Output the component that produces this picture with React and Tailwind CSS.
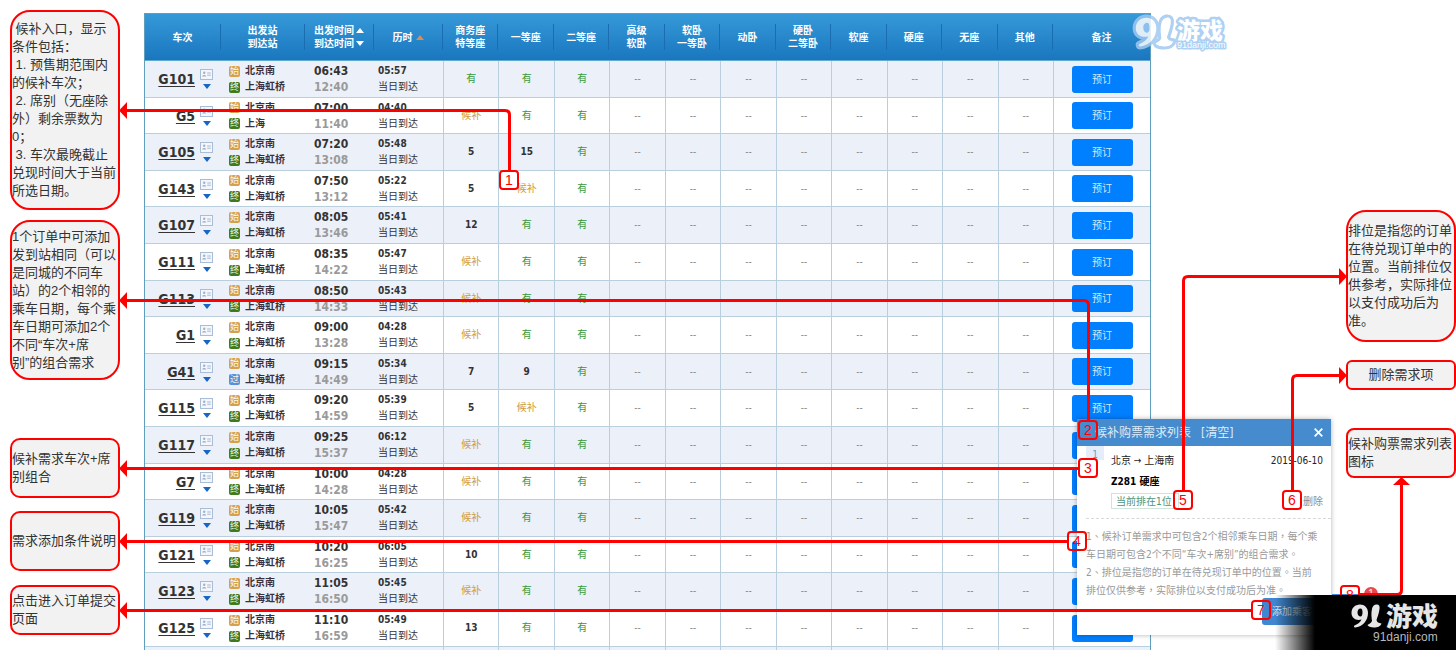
const latin = "font-['DejaVu_Sans_Condensed','DejaVu_Sans','Noto_Sans_CJK_SC',sans-serif]"

const stationTags = {
  start: { text: '始', className: 'bg-[#d3a150]' },
  end: { text: '终', className: 'bg-[#3f7a1c]' },
  pass: { text: '过', className: 'bg-[#5b8fd8]' },
}

// business, first and second class are the only seats sold on these trains
const trains = [
  { no: 'G101', from: '北京南', to: '上海虹桥', dep: '06:43', arr: '12:40', time: '05:57', seats: ['有', '有', '有'] },
  { no: 'G5', from: '北京南', to: '上海', dep: '07:00', arr: '11:40', time: '04:40', seats: ['候补', '有', '有'] },
  { no: 'G105', from: '北京南', to: '上海虹桥', dep: '07:20', arr: '13:08', time: '05:48', seats: ['5', '15', '有'] },
  { no: 'G143', from: '北京南', to: '上海虹桥', dep: '07:50', arr: '13:12', time: '05:22', seats: ['5', '候补', '有'] },
  { no: 'G107', from: '北京南', to: '上海虹桥', dep: '08:05', arr: '13:46', time: '05:41', seats: ['12', '有', '有'] },
  { no: 'G111', from: '北京南', to: '上海虹桥', dep: '08:35', arr: '14:22', time: '05:47', seats: ['候补', '有', '有'] },
  { no: 'G113', from: '北京南', to: '上海虹桥', dep: '08:50', arr: '14:33', time: '05:43', seats: ['候补', '有', '有'] },
  { no: 'G1', from: '北京南', to: '上海虹桥', dep: '09:00', arr: '13:28', time: '04:28', seats: ['候补', '有', '有'] },
  { no: 'G41', from: '北京南', to: '上海虹桥', dep: '09:15', arr: '14:49', time: '05:34', seats: ['7', '9', '有'], toTag: 'pass' },
  { no: 'G115', from: '北京南', to: '上海虹桥', dep: '09:20', arr: '14:59', time: '05:39', seats: ['5', '候补', '有'] },
  { no: 'G117', from: '北京南', to: '上海虹桥', dep: '09:25', arr: '15:37', time: '06:12', seats: ['候补', '有', '有'] },
  { no: 'G7', from: '北京南', to: '上海虹桥', dep: '10:00', arr: '14:28', time: '04:28', seats: ['候补', '有', '有'] },
  { no: 'G119', from: '北京南', to: '上海虹桥', dep: '10:05', arr: '15:47', time: '05:42', seats: ['候补', '有', '有'] },
  { no: 'G121', from: '北京南', to: '上海虹桥', dep: '10:20', arr: '16:25', time: '06:05', seats: ['10', '有', '有'] },
  { no: 'G123', from: '北京南', to: '上海虹桥', dep: '11:05', arr: '16:50', time: '05:45', seats: ['候补', '有', '有'] },
  { no: 'G125', from: '北京南', to: '上海虹桥', dep: '11:10', arr: '16:59', time: '05:49', seats: ['13', '有', '有'] },
]

const seatHeads = [
  ['商务座', '特等座'], ['一等座'], ['二等座'], ['高级', '软卧'], ['软卧', '一等卧'], ['动卧'],
  ['硬卧', '二等卧'], ['软座'], ['硬座'], ['无座'], ['其他'],
]

const leftNotes = [
  {
    box: 'h-[200px] rounded-[20px]',
    lines: [' 候补入口，显示', '条件包括：', ' 1. 预售期范围内', '的候补车次；', ' 2. 席别（无座除', '外）剩余票数为', '0；', ' 3. 车次最晚截止', '兑现时间大于当前', '所选日期。'],
  },
  {
    box: 'mt-[10px] h-[160px] rounded-[20px]',
    lines: ['1个订单中可添加', '发到站相同（可以', '是同城的不同车', '站）的2个相邻的', '乘车日期，每个乘', '车日期可添加2个', '不同“车次+席', '别”的组合需求'],
  },
  { box: 'mt-[58px] h-[60px] rounded-[10px]', lines: ['候补需求车次+席', '别组合'] },
  { box: 'mt-[13px] h-[60px] rounded-[10px]', lines: ['需求添加条件说明'] },
  { box: 'mt-[14px] h-[50px] rounded-[10px]', lines: ['点击进入订单提交', '页面'] },
]

const rightNotes = [
  {
    box: 'h-[132px] rounded-[20px]',
    lines: ['排位是指您的订单', '在待兑现订单中的', '位置。当前排位仅', '供参考，实际排位', '以支付成功后为', '准。'],
  },
  { box: 'mt-[18px] h-[30px] items-center rounded-[6px]', lines: ['删除需求项'] },
  { box: 'mt-[38px] h-[50px] rounded-[8px]', lines: ['候补购票需求列表', '图标'] },
]

const markers = [
  { n: 1, at: 'left-[499px] top-[170px]' },
  { n: 2, at: 'left-[1078px] top-[420px]' },
  { n: 3, at: 'left-[1078px] top-[458px]' },
  { n: 4, at: 'left-[1067px] top-[531px]' },
  { n: 5, at: 'left-[1173px] top-[490px]' },
  { n: 6, at: 'left-[1282px] top-[490px]' },
  { n: 7, at: 'left-[1251px] top-[600px]' },
  { n: 8, at: 'left-[1340px] top-[585px]' },
]

const Note = ({ note }) => (
  <div
    className={`flex flex-col justify-center whitespace-pre border-2 border-[#ff0000] bg-[#f2f2f2] text-[13px] leading-[18px] text-[#333333] ${note.box}`}
  >
    {note.lines.map(line => (
      <p key={line}>{line}</p>
    ))}
  </div>
)

const StationTag = ({ type }) => (
  <span
    className={`flex size-[11px] items-center justify-center rounded-[2px] text-[9px] font-normal leading-none text-[#fff8e8] ${stationTags[type].className}`}
  >
    {stationTags[type].text}
  </span>
)

const CardIcon = () => (
  <svg width="13" height="11" viewBox="0 0 13 11" fill="none">
    <rect x="0.5" y="0.5" width="12" height="10" fill="#f3f7fc" stroke="#a9bdd6" />
    <circle cx="4.2" cy="3.7" r="1.2" fill="#9fb0c8" />
    <path d="M2.2 7.5c0-2 4-2 4 0z" fill="#9fb0c8" />
    <path d="M7.2 4h3.6M7.2 6.2h3.6" stroke="#a9b7cb" />
  </svg>
)

const Triangle = ({ up, color }) => (
  <svg width="8" height="5" viewBox="0 0 8 5" className="inline-block shrink-0">
    <path d={up ? 'M0 5 4 0l4 5z' : 'M0 0h8L4 5z'} fill={color} />
  </svg>
)

const HeadCell = ({ children, last }) => (
  <th className="h-[47px] border-b border-[#5fa9d2] p-0 text-[10px] font-bold leading-[13px] text-white">
    <div
      className={`flex h-[26px] flex-col items-center justify-center ${last ? '' : 'border-r border-[#1b6cb0]'}`}
    >
      {children}
    </div>
  </th>
)

const Seat = ({ value }) => {
  if (value === '有') return <span className="text-[#36993a]">有</span>
  if (value === '候补') return <a href="#waitlist" className="text-[#d29a35]">候补</a>
  if (value === '--') return <span className="text-[#8a8a8a]">--</span>
  return <span className="font-bold text-[#333333]">{value}</span>
}

const cellLine = 'border-b border-[#b9cfde] p-0'

const TrainRow = ({ train }) => (
  <tr className="h-[37px] odd:bg-[#ecf0f8] even:bg-white nth-[5n+2]:h-9 nth-[5n+4]:h-9">
    <td className={cellLine}>
      <div className="flex items-center justify-end gap-[5px] pr-2">
        <a href="#train" className="text-[14px] font-bold leading-4 text-[#333333] underline underline-offset-2">
          {train.no}
        </a>
        <div className="flex flex-col items-center gap-1">
          <CardIcon />
          <Triangle color="#1766c6" />
        </div>
      </div>
    </td>
    <td className={cellLine}>
      <div className="pl-2 text-[10px] font-bold leading-4 text-[#3a2f3c]">
        <div className="flex items-center gap-[5px]"><StationTag type="start" />{train.from}</div>
        <div className="flex items-center gap-[5px]"><StationTag type={train.toTag || 'end'} />{train.to}</div>
      </div>
    </td>
    <td className={cellLine}>
      <div className="pl-[9px] text-[12px] font-bold leading-4">
        <p className="text-[#333333]">{train.dep}</p>
        <p className="text-[#9a9a9a]">{train.arr}</p>
      </div>
    </td>
    <td className={cellLine}>
      <div className="pl-1 text-[10px] leading-4 text-[#333333]">
        <p className="font-bold">{train.time}</p>
        <p>当日到达</p>
      </div>
    </td>
    {seatHeads.map((head, i) => (
      <td key={i} className="border-b border-l border-[#b9cfde] p-0 text-center text-[10px] leading-4">
        <Seat value={train.seats[i] || '--'} />
      </td>
    ))}
    <td className="border-b border-l border-[#b9cfde] p-0 text-center">
      <button className="mx-auto block h-[27px] w-[61px] rounded-[3px] bg-[#007fff] text-[10px] text-[#d3eaff]">
        预订
      </button>
    </td>
  </tr>
)

const TrainTable = () => (
  <table className={`w-full table-fixed border-separate border-spacing-0 border-x border-t border-[#5f9fbd] ${latin}`}>
    <colgroup>
      <col className="w-[76px]" />
      <col className="w-[84px]" />
      <col className="w-[69px]" />
      <col className="w-[69px]" />
      {seatHeads.map((head, i) => <col key={i} />)}
      <col className="w-[97px]" />
    </colgroup>
    <thead className="bg-linear-to-b from-[#3599d8] to-[#1976be]">
      <tr>
        <HeadCell>车次</HeadCell>
        <HeadCell><span>出发站</span><span>到达站</span></HeadCell>
        <HeadCell>
          <span className="flex items-center gap-[2px]">出发时间<Triangle up color="#ffffff" /></span>
          <span className="flex items-center gap-[2px]">到达时间<Triangle color="#ffffff" /></span>
        </HeadCell>
        <HeadCell>
          <span className="flex items-center gap-[3px]">历时<Triangle up color="#dc8b52" /></span>
        </HeadCell>
        {seatHeads.map((head, i) => (
          <HeadCell key={i}>
            {head.map(line => <span key={line}>{line}</span>)}
          </HeadCell>
        ))}
        <HeadCell last>备注</HeadCell>
      </tr>
    </thead>
    <tbody>
      {trains.map(train => <TrainRow key={train.no} train={train} />)}
      <tr className="h-[37px] bg-[#ecf0f8]">
        <td colSpan={4} />
        {seatHeads.map((head, i) => <td key={i} className="border-l border-[#b9cfde]" />)}
        <td className="border-l border-[#b9cfde]" />
      </tr>
    </tbody>
  </table>
)

const WaitlistPanel = () => (
  <section
    className={`absolute left-[1077px] top-[419px] h-[216px] w-[254px] bg-white text-[10px] text-[#222222] shadow-[0_0_5px_rgba(0,0,0,0.3)] font-['DejaVu_Sans_Condensed','DejaVu_Sans','Noto_Sans_CJK_TC',sans-serif]`}
  >
    <div className="flex h-[27px] items-center bg-[#468bcd] pl-[18px] pr-2 text-[12px] text-[#dcecf8]">
      <h2>候补购票需求列表</h2>
      <button className="ml-[10px]">[清空]</button>
      <button aria-label="关闭" className="ml-auto text-white">
        <svg width="9" height="9" viewBox="0 0 9 9" stroke="currentColor" strokeWidth="1.8">
          <path d="M0.7 0.7l7.6 7.6M8.3 0.7L0.7 8.3" />
        </svg>
      </button>
    </div>

    {/* Queued request */}
    <div className="ml-[9px] flex h-[73px] border-b border-dashed border-[#d8d8d8]">
      <span className="h-[14px] w-[18px] bg-[#e4eefa] pt-[2px] text-center leading-[14px] text-[#6d9cc9]">1</span>
      <div className="flex-1 pl-[7px] pr-2 pt-[5px]">
        <div className="flex justify-between leading-5">
          <span>北京 → 上海南</span>
          <span>2019-06-10</span>
        </div>
        <p className="font-bold leading-[22px] text-black">Z281 硬座</p>
        <div className="flex items-center justify-between">
          <span className="flex h-4 w-[68px] items-center border border-[#cde5da] pl-1 text-[#4c957a]">当前排在1位</span>
          <button className="text-[#8c8c8c]">删除</button>
        </div>
      </div>
    </div>

    <div className="whitespace-nowrap pl-[9px] pt-[9px] leading-[18px] text-[#999999]">
      <p>1、候补订单需求中可包含2个相邻乘车日期，每个乘</p>
      <p>车日期可包含2个不同“车次+席别”的组合需求。</p>
      <p>2、排位是指您的订单在待兑现订单中的位置。当前</p>
      <p>排位仅供参考，实际排位以支付成功后为准。</p>
    </div>
    <button className="absolute right-2 top-[179px] h-[27px] w-[61px] rounded-[3px] bg-[#3f87d0] pl-[10px] text-left text-[10px] text-[#dcecf8]">
      添加乘客
    </button>
  </section>
)

const Connectors = () => (
  <svg width="1456" height="650" viewBox="0 0 1456 650" className="pointer-events-none absolute left-0 top-0" fill="none">
    <g stroke="#ff0000" strokeWidth="3">
      <path d="M126 110.5H505q4.500 0 4.500 4.500V170" />
      <path d="M126 300.500H1084q4.500 0 4.500 4.500V420" />
      <path d="M126 468.500H1078" />
      <path d="M126 541.500H1067" />
      <path d="M126 610.500H1251" />
      <path d="M1183.500 490V281q0-4.500 4.500-4.500H1340" />
      <path d="M1292.500 490V380q0-4.500 4.500-4.500H1340" />
      <path d="M1360 594.500H1397q4.500 0 4.500-4.500V484" />
    </g>
    <g fill="#ff0000">
      <path d="M119 110.500l8-8.500v17z" />
      <path d="M119 300.500l8-8.500v17z" />
      <path d="M119 468.500l8-8.500v17z" />
      <path d="M119 541.500l8-8.500v17z" />
      <path d="M119 610.500l8-8.500v17z" />
      <path d="M1347 276.500l-8-8.500v17z" />
      <path d="M1347 375.500l-8-8.500v17z" />
      <path d="M1401.500 477l-8.500 8h17z" />
    </g>
  </svg>
)

// The emblem: a bulb-headed curl beside a leaning pin with a round foot
const LogoMark = ({ x, y, width, height }) => (
  <svg x={x} y={y} width={width} height={height} viewBox="0 0 31 24" overflow="visible">
    <path
      fillRule="evenodd"
      d="M9 0.500C13.500 0.500 17 3.500 17 9C17 16 12 23 4 23.500C3 23.500 2.500 22 3.500 21.500C7 20 9.500 18 10.500 15.500C5 17 0.500 14 0.500 9C0.500 4 4 0.500 9 0.500ZM9.500 4.500C7.500 4.500 6.500 6.500 6.500 8.500C6.500 11 8 12.500 9.500 12.500C11 12.500 11.500 10.500 11.500 8.500C11.500 6 11 4.500 9.500 4.500Z"
    />
    <path d="M25 0.500C28 0 29 2 28.500 5C28 9 26.500 13 25.500 16C26 18.500 27.500 19 30.500 19.500C29.500 22.500 26.500 23.500 23 23.500C19.500 23.500 17 22.500 16.500 21C18 20 20 19.500 21 17C20.500 13 20 9 21 5C21.500 2.500 22.500 1 25 0.500Z" />
  </svg>
)

const HeaderLogo = () => (
  <svg width="100" height="44" viewBox="0 0 100 44" className="absolute left-[1130px] top-[12px]" role="img" aria-label="91游戏">
    <g fill="#ffffff" stroke="#9fc8f2" strokeWidth="5" strokeLinejoin="round" paintOrder="stroke" opacity="0.85">
      <LogoMark x="5" y="5" width="39" height="30" />
      <text x="47" y="27" fontFamily="'Noto Sans CJK SC', sans-serif" fontWeight="900" fontSize="23">游戏</text>
      <text x="47" y="36" fontFamily="'Liberation Sans', sans-serif" fontSize="9" strokeWidth="3">91danji.com</text>
    </g>
  </svg>
)

const CornerLogo = () => (
  <svg width="96" height="44" viewBox="0 0 96 44" className="mt-[6px]" role="img" aria-label="91游戏">
    <g fill="#e6e6e6">
      <LogoMark x="3" y="3" width="31" height="24" />
      <text x="38" y="25" fontFamily="'Noto Sans CJK SC', sans-serif" fontWeight="900" fontSize="26">游戏</text>
      <text x="25" y="40" fontFamily="'Liberation Sans', sans-serif" fontSize="12" fill="#b8b8b8">91danji.com</text>
    </g>
  </svg>
)

export default function App() {
  return (
    <div className="relative h-screen overflow-hidden bg-white font-['Liberation_Sans','Noto_Sans_CJK_SC',sans-serif]">
      <div className="flex items-start">
        <aside className="ml-[10px] w-[110px] shrink-0 pt-[10px]">
          {leftNotes.map(note => <Note key={note.lines[0]} note={note} />)}
        </aside>
        <main className="ml-6 min-w-0 flex-1 pt-[13px]">
          <TrainTable />
        </main>
        <aside className="ml-[195px] w-[110px] shrink-0 pt-[210px]">
          {rightNotes.map(note => <Note key={note.lines[0]} note={note} />)}
        </aside>
      </div>

      <HeaderLogo />

      <WaitlistPanel />

      {/* Floating list button with its counter */}
      <div className="absolute left-[1332px] top-[594px] h-10 w-10 bg-[#3f87d0]" />
      <span className="absolute left-[1364px] top-[587px] flex size-[14px] items-center justify-center rounded-full bg-[#e84a4a] text-[10px] leading-none text-white">
        1
      </span>

      <Connectors />
      {markers.map(marker => (
        <span
          key={marker.n}
          className={`absolute flex size-5 items-center justify-center rounded-[4px] border-2 border-[#ff0000] text-[14px] leading-none text-[#ff0000] ${marker.at}`}
        >
          {marker.n}
        </span>
      ))}

      {/* Site strip in the corner */}
      <div className="absolute bottom-0 right-0 flex h-[55px] w-[181px] justify-end bg-linear-to-r from-transparent to-black to-[40px] pr-[12px]">
        <CornerLogo />
      </div>
    </div>
  )
}
